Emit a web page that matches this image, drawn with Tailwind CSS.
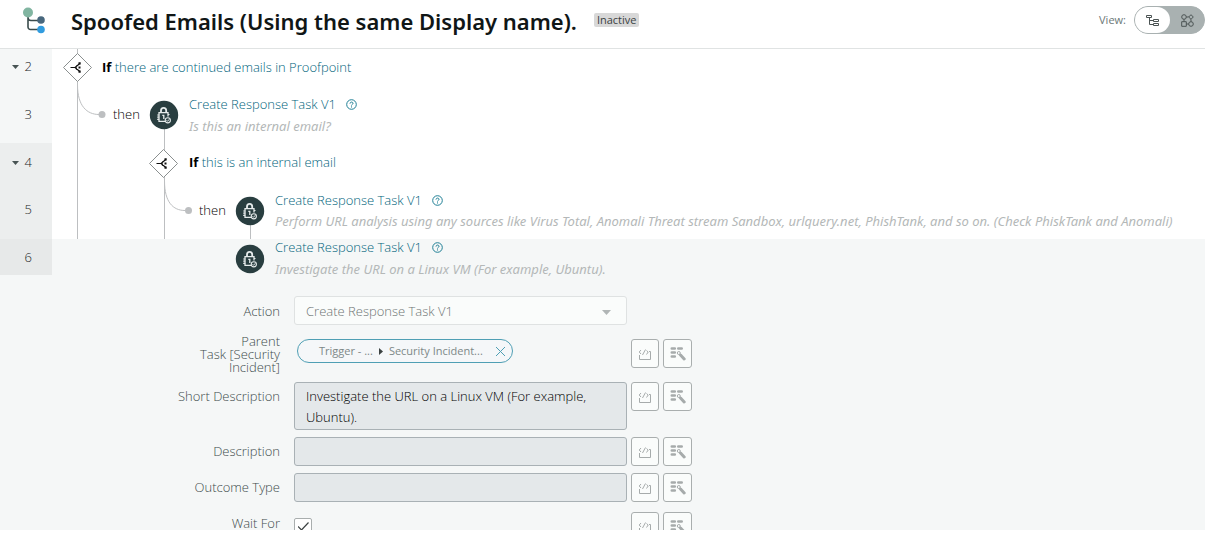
<!DOCTYPE html>
<html lang="en">
  <head>
    <meta charset="UTF-8" />
    <meta name="viewport" content="width=device-width, initial-scale=1.0" />
    <title>Spoofed Emails (Using the same Display name).</title>
    <script src="https://cdn.jsdelivr.net/npm/@tailwindcss/browser@4"></script>
  </head>
  <body class="flex h-screen flex-col overflow-hidden bg-white pb-[11px] font-['Open_Sans','Noto_Sans',sans-serif] text-[13px] leading-5 font-light text-black">
    <!-- Shared icons -->
    <svg class="hidden">
      <symbol id="task" viewBox="0 0 30 30">
        <circle cx="15" cy="15" r="14.2" fill="#293e40" />
        <g fill="none" stroke="#e6ebeb" stroke-width="1.3">
          <path d="M12 12.500v-2a2.600 2.600 0 0 1 5.200 0v2" stroke-width="1.800" />
          <path d="M19 16.500v-3.800h-9v8.600h6.300" />
          <path d="M8.200 15h2M8.200 17.200h2M8.200 19.400h2M19 14.500h1.500" stroke-width="1.200" />
          <path d="M13.300 15.300h1.500v3.800" />
          <circle cx="18.800" cy="20.300" r="2.600" fill="#293e40" stroke-width="1.100" />
          <path d="M17.500 20.300l1 1 1.700-2" stroke-width="1" />
        </g>
      </symbol>
      <symbol id="branch" viewBox="0 0 30 30">
        <path d="M15 1L29 15 15 29 1 15z" fill="#fff" stroke="#8a8f8f" />
        <path d="M8 15h4.500M17 11.200L12.500 15l4.500 3.800M14.500 12.800c-1.300 1.300-1.300 3.100 0 4.400" fill="none" stroke="#111" stroke-width="1.200" />
        <path d="M16 9.700h2.200v2.200H16zM16 18.100h2.200v2.200H16zM16 14h2v2h-2z" fill="#111" />
      </symbol>
      <symbol id="help" viewBox="0 0 11 11">
        <circle cx="5.500" cy="5.500" r="4.800" fill="none" stroke="#1f7f95" />
        <path d="M4 4.600c0-2 3-2 3-.2 0 1-1.500 1-1.500 2.100M5.500 7.400v1.100" fill="none" stroke="#1f7f95" />
      </symbol>
      <symbol id="code" viewBox="0 0 14 14">
        <path d="M3 3L1.200 5 3 7M7.500 2.500L4.500 8M8.500 3.500L10.200 5 8.500 7.500M1.500 8v4.500h11V4.500H11" fill="none" stroke="#a6abab" />
      </symbol>
      <symbol id="pick" viewBox="0 0 16 16">
        <path d="M1.800 2.500h3M8.300 2.500h3.400M1.800 6.500h3M1.800 10.500h3" fill="none" stroke="#a6abab" stroke-width="2.600" stroke-linecap="round" />
        <path d="M10.500 9l3.700 4" fill="none" stroke="#a6abab" stroke-width="3" stroke-linecap="round" />
        <circle cx="8.800" cy="7" r="1.500" fill="none" stroke="#a6abab" />
      </symbol>
    </svg>

    <header class="flex h-[49px] shrink-0 items-start border-b border-[#e0e3e3] pl-[22px]">
      <svg class="mt-[6px] h-7 w-6 shrink-0" viewBox="0 0 24 28">
        <path d="M6 8v13a2.500 2.500 0 0 0 2.500 2.500H18M6 11.500A3 3 0 0 0 9 14.500h9" fill="none" stroke="#3a4b4c" stroke-width="1.600" />
        <circle cx="6" cy="6.500" r="5" fill="#81b5a1" />
        <circle cx="19" cy="14" r="3.800" fill="#48677d" />
        <circle cx="19" cy="23.500" r="3.800" fill="#319cdf" />
      </svg>
      <h1 class="mt-[5px] ml-[25px] font-['Noto_Sans','Open_Sans',sans-serif] text-[22px] leading-8 font-semibold whitespace-nowrap text-[#101616]">Spoofed Emails (Using the same Display name).</h1>
      <span class="mt-[13px] ml-[17px] rounded-xs bg-[#d8d8d8] px-[3px] text-[11px] leading-[14px] font-normal text-[#3c4242]">Inactive</span>
      <div class="mt-[6px] ml-auto flex items-center gap-2 text-[11px] font-normal text-[#6b7878]">
        View:
        <div class="flex h-7 w-[71px] rounded-full border border-[#a9b1b1] bg-[#a9b1b1]">
          <button aria-label="Tree view" class="flex w-[35px] items-center justify-center rounded-full bg-white">
            <svg class="size-[13px]" viewBox="0 0 13 13" fill="none" stroke="#4c5454"><path d="M.5 1.500h5v2h-5zM7.500 5.500h5v2h-5zM7.500 9.500h5v2h-5zM3.500 3.500v7h4M3.500 6.500h4" /></svg>
          </button>
          <button aria-label="Diagram view" class="flex flex-1 items-center justify-center">
            <svg class="size-[13px]" viewBox="0 0 13 13" fill="none" stroke="#4c5454"><circle cx="3" cy="3" r="2.300" /><path d="M10 .7L12.300 3 10 5.300 7.700 3zM.7 7.700h4.600v4.600H.7zM5.300 3h2.400M3 5.300v2.400M10 5.300v2.400M5.300 10h2.400" /><circle cx="10" cy="10" r="2.300" /></svg>
          </button>
        </div>
      </div>
    </header>

    <main class="flex min-h-0 flex-1 flex-col overflow-hidden">
      <!-- Row 2 -->
      <section class="flex h-[46px] shrink-0">
        <div class="flex w-[52px] items-start justify-end gap-[6px] bg-[#f5f7f7] pt-[7px] pr-5 text-[#1c2626]">
          <svg class="mt-[9px] h-1 w-[7px]" viewBox="0 0 7 4"><path d="M0 0h7L3.500 4z" fill="#485454" /></svg>2
        </div>
        <svg class="h-[46px] w-[50px]" viewBox="0 0 50 46">
          <path d="M25.500 0v46" stroke="#bdbfc1" />
          <use href="#branch" x="10.500" y="3.500" width="30" height="30" />
        </svg>
        <p class="pt-[8px]"><b class="font-bold">If</b> <a href="#" class="text-[#00647c]">there are continued emails in Proofpoint</a></p>
      </section>

      <!-- Row 3 -->
      <section class="flex h-12 shrink-0">
        <div class="w-[52px] bg-[#f5f7f7] pt-[9px] pr-5 text-right text-[#1c2626]">3</div>
        <svg class="h-12 w-[61px] overflow-visible" viewBox="0 0 61 48">
          <path d="M25.500 0v48M25.500-10C25.500 11 35 19.500 47 19.500" fill="none" stroke="#bdbfc1" />
          <circle cx="50" cy="19.500" r="3.500" fill="#bdbfc1" />
        </svg>
        <span class="w-9 pt-[9px]">then</span>
        <svg class="h-12 w-10" viewBox="0 0 40 48">
          <path d="M15.500 30v18" stroke="#bdbfc1" />
          <use href="#task" y="5" width="30" height="30" />
        </svg>
        <div class="-mt-px">
          <a href="#" class="flex items-center gap-[10px] text-[#00647c]">Create Response Task V1 <svg class="size-[11px]"><use href="#help" /></svg></a>
          <p class="pt-[2px] font-['Noto_Sans','Open_Sans',sans-serif] font-normal text-[#b4b8b8] italic">Is this an internal email?</p>
        </div>
      </section>

      <!-- Row 4 -->
      <section class="flex h-12 shrink-0">
        <div class="flex w-[52px] items-start justify-end gap-[6px] bg-[#eceeee] pt-[9px] pr-5 text-[#1c2626]">
          <svg class="mt-[9px] h-1 w-[7px]" viewBox="0 0 7 4"><path d="M0 0h7L3.500 4z" fill="#485454" /></svg>4
        </div>
        <svg class="h-12 w-[137px]" viewBox="0 0 137 48">
          <path d="M25.500 0v48M112.500 0v48" stroke="#bdbfc1" />
          <use href="#branch" x="96.500" y="5.500" width="30" height="30" />
        </svg>
        <p class="pt-[9px]"><b class="font-bold">If</b> <a href="#" class="text-[#00647c]">this is an internal email</a></p>
      </section>

      <!-- Row 5 -->
      <section class="flex h-12 shrink-0">
        <div class="w-[52px] bg-[#eceeee] pt-[8px] pr-5 text-right text-[#1c2626]">5</div>
        <svg class="h-12 w-[147px] overflow-visible" viewBox="0 0 147 48">
          <path d="M25.500 0v48M112.500 0v48M112.500-10C112.500 11 121 19.500 133 19.500" fill="none" stroke="#bdbfc1" />
          <circle cx="136.500" cy="19.500" r="3.500" fill="#bdbfc1" />
        </svg>
        <span class="w-9 pt-[9px]">then</span>
        <svg class="h-12 w-10" viewBox="0 0 40 48">
          <path d="M15.500 30v18" stroke="#bdbfc1" />
          <use href="#task" y="5" width="30" height="30" />
        </svg>
        <div class="-mt-px whitespace-nowrap">
          <a href="#" class="flex items-center gap-[10px] text-[#00647c]">Create Response Task V1 <svg class="size-[11px]"><use href="#help" /></svg></a>
          <p class="pt-px font-['Noto_Sans','Open_Sans',sans-serif] font-normal text-[#b4b8b8] italic">Perform URL analysis using any sources like Virus Total, Anomali Threat stream Sandbox, urlquery.net, PhishTank, and so on. (Check PhiskTank and Anomali)</p>
        </div>
      </section>

      <!-- Row 6, expanded -->
      <section class="min-h-0 flex-1 bg-[#f5f7f7]">
        <div class="flex h-[57px]">
          <div class="h-9 w-[52px] bg-[#e7e9e9] pt-[8px] pr-5 text-right text-[#1c2626]">6</div>
          <svg class="ml-[183px] h-12 w-10" viewBox="0 0 40 48"><use href="#task" y="5" width="30" height="30" /></svg>
          <div class="-mt-[2px]">
            <a href="#" class="flex items-center gap-[10px] text-[#00647c]">Create Response Task V1 <svg class="size-[11px]"><use href="#help" /></svg></a>
            <p class="pt-[2px] font-['Noto_Sans','Open_Sans',sans-serif] font-normal text-[#b4b8b8] italic">Investigate the URL on a Linux VM (For example, Ubuntu).</p>
          </div>
        </div>

        <form class="flex flex-col pl-[160px] text-[#3e4c4c]">
          <div class="flex h-[43px]">
            <label for="action" class="w-[120px] pt-[5px] text-right">Action</label>
            <div class="relative ml-[14px] h-[29px] w-[333px]">
              <select id="action" disabled class="h-full w-full appearance-none rounded-[3px] border border-[#dfe2e2] bg-[#fafcfb] px-[11px] text-[#6e7474]">
                <option>Create Response Task V1</option>
              </select>
              <svg class="absolute top-[14px] right-4 h-[5px] w-[9px]" viewBox="0 0 9 5"><path d="M0 0h9L4.500 5z" fill="#b0b5b5" /></svg>
            </div>
          </div>

          <div class="flex h-[43px] gap-1">
            <span class="-mt-1 ml-5 w-[100px] text-right leading-[13px]">Parent<br />Task [Security Incident]</span>
            <div class="ml-[10px] w-[333px] pl-[3px]">
              <div class="flex h-6 w-[216px] items-center rounded-full border border-[#4f9fb4] bg-[#f5f7f9] pr-[7px] pl-[21px] text-[11px] font-normal text-[#7d8888]">
                Trigger - ...
                <svg class="mx-[6px] h-[7px] w-1" viewBox="0 0 4 7"><path d="M0 0v7L4 3.500z" fill="#3c4242" /></svg>
                Security Incident...
                <button type="button" aria-label="Remove" class="ml-auto"><svg class="size-[9px]" viewBox="0 0 9 9"><path d="M0 0l9 9M9 0L0 9" stroke="#4f9fb4" /></svg></button>
              </div>
            </div>
            <button type="button" aria-label="Script" class="flex h-[29px] w-7 items-center justify-center rounded-[3px] border border-[#a9aeae] bg-[#fafcfb]"><svg class="size-[14px]"><use href="#code" /></svg></button>
            <button type="button" aria-label="Pick data" class="flex h-[29px] w-[29px] items-center justify-center rounded-[3px] border border-[#a9aeae] bg-[#fafcfb]"><svg class="size-4"><use href="#pick" /></svg></button>
          </div>

          <div class="flex h-[55px] gap-1">
            <label for="short" class="w-[120px] pt-1 text-right">Short Description</label>
            <textarea id="short" class="ml-[10px] h-12 w-[333px] resize-none overflow-hidden rounded-[3px] border border-[#a9b1b5] bg-[#e4e8ea] px-[11px] py-[3px] leading-[21px] text-black">Investigate the URL on a Linux VM (For example, Ubuntu).</textarea>
            <button type="button" aria-label="Script" class="flex h-[29px] w-7 items-center justify-center rounded-[3px] border border-[#a9aeae] bg-[#fafcfb]"><svg class="size-[14px]"><use href="#code" /></svg></button>
            <button type="button" aria-label="Pick data" class="flex h-[29px] w-[29px] items-center justify-center rounded-[3px] border border-[#a9aeae] bg-[#fafcfb]"><svg class="size-4"><use href="#pick" /></svg></button>
          </div>

          <div class="flex h-9 gap-1">
            <label for="desc" class="w-[120px] pt-1 text-right">Description</label>
            <input id="desc" type="text" class="ml-[10px] h-[29px] w-[333px] rounded-[3px] border border-[#a9b1b5] bg-[#e4e8ea] px-[11px]" />
            <button type="button" aria-label="Script" class="flex h-[29px] w-7 items-center justify-center rounded-[3px] border border-[#a9aeae] bg-[#fafcfb]"><svg class="size-[14px]"><use href="#code" /></svg></button>
            <button type="button" aria-label="Pick data" class="flex h-[29px] w-[29px] items-center justify-center rounded-[3px] border border-[#a9aeae] bg-[#fafcfb]"><svg class="size-4"><use href="#pick" /></svg></button>
          </div>

          <div class="flex h-[39px] gap-1">
            <label for="outcome" class="w-[120px] pt-1 text-right">Outcome Type</label>
            <input id="outcome" type="text" class="ml-[10px] h-[29px] w-[333px] rounded-[3px] border border-[#a9b1b5] bg-[#e4e8ea] px-[11px]" />
            <button type="button" aria-label="Script" class="flex h-[29px] w-7 items-center justify-center rounded-[3px] border border-[#a9aeae] bg-[#fafcfb]"><svg class="size-[14px]"><use href="#code" /></svg></button>
            <button type="button" aria-label="Pick data" class="flex h-[29px] w-[29px] items-center justify-center rounded-[3px] border border-[#a9aeae] bg-[#fafcfb]"><svg class="size-4"><use href="#pick" /></svg></button>
          </div>

          <div class="flex h-9 gap-1">
            <label for="wait" class="w-[120px] pt-px text-right">Wait For</label>
            <div class="relative ml-[10px] w-[333px] pt-[6px]">
              <input id="wait" type="checkbox" checked class="block size-[18px] appearance-none rounded-xs border border-[#a9aeae] bg-white" />
              <svg class="pointer-events-none absolute top-[10px] left-1 h-[9px] w-[11px]" viewBox="0 0 11 9"><path d="M0 4.500L3.500 8 10.500.5" fill="none" stroke="#3c4242" stroke-width="1.200" /></svg>
            </div>
            <button type="button" aria-label="Script" class="flex h-[29px] w-7 items-center justify-center rounded-[3px] border border-[#a9aeae] bg-[#fafcfb]"><svg class="size-[14px]"><use href="#code" /></svg></button>
            <button type="button" aria-label="Pick data" class="flex h-[29px] w-[29px] items-center justify-center rounded-[3px] border border-[#a9aeae] bg-[#fafcfb]"><svg class="size-4"><use href="#pick" /></svg></button>
          </div>
        </form>
      </section>
    </main>
  </body>
</html>
